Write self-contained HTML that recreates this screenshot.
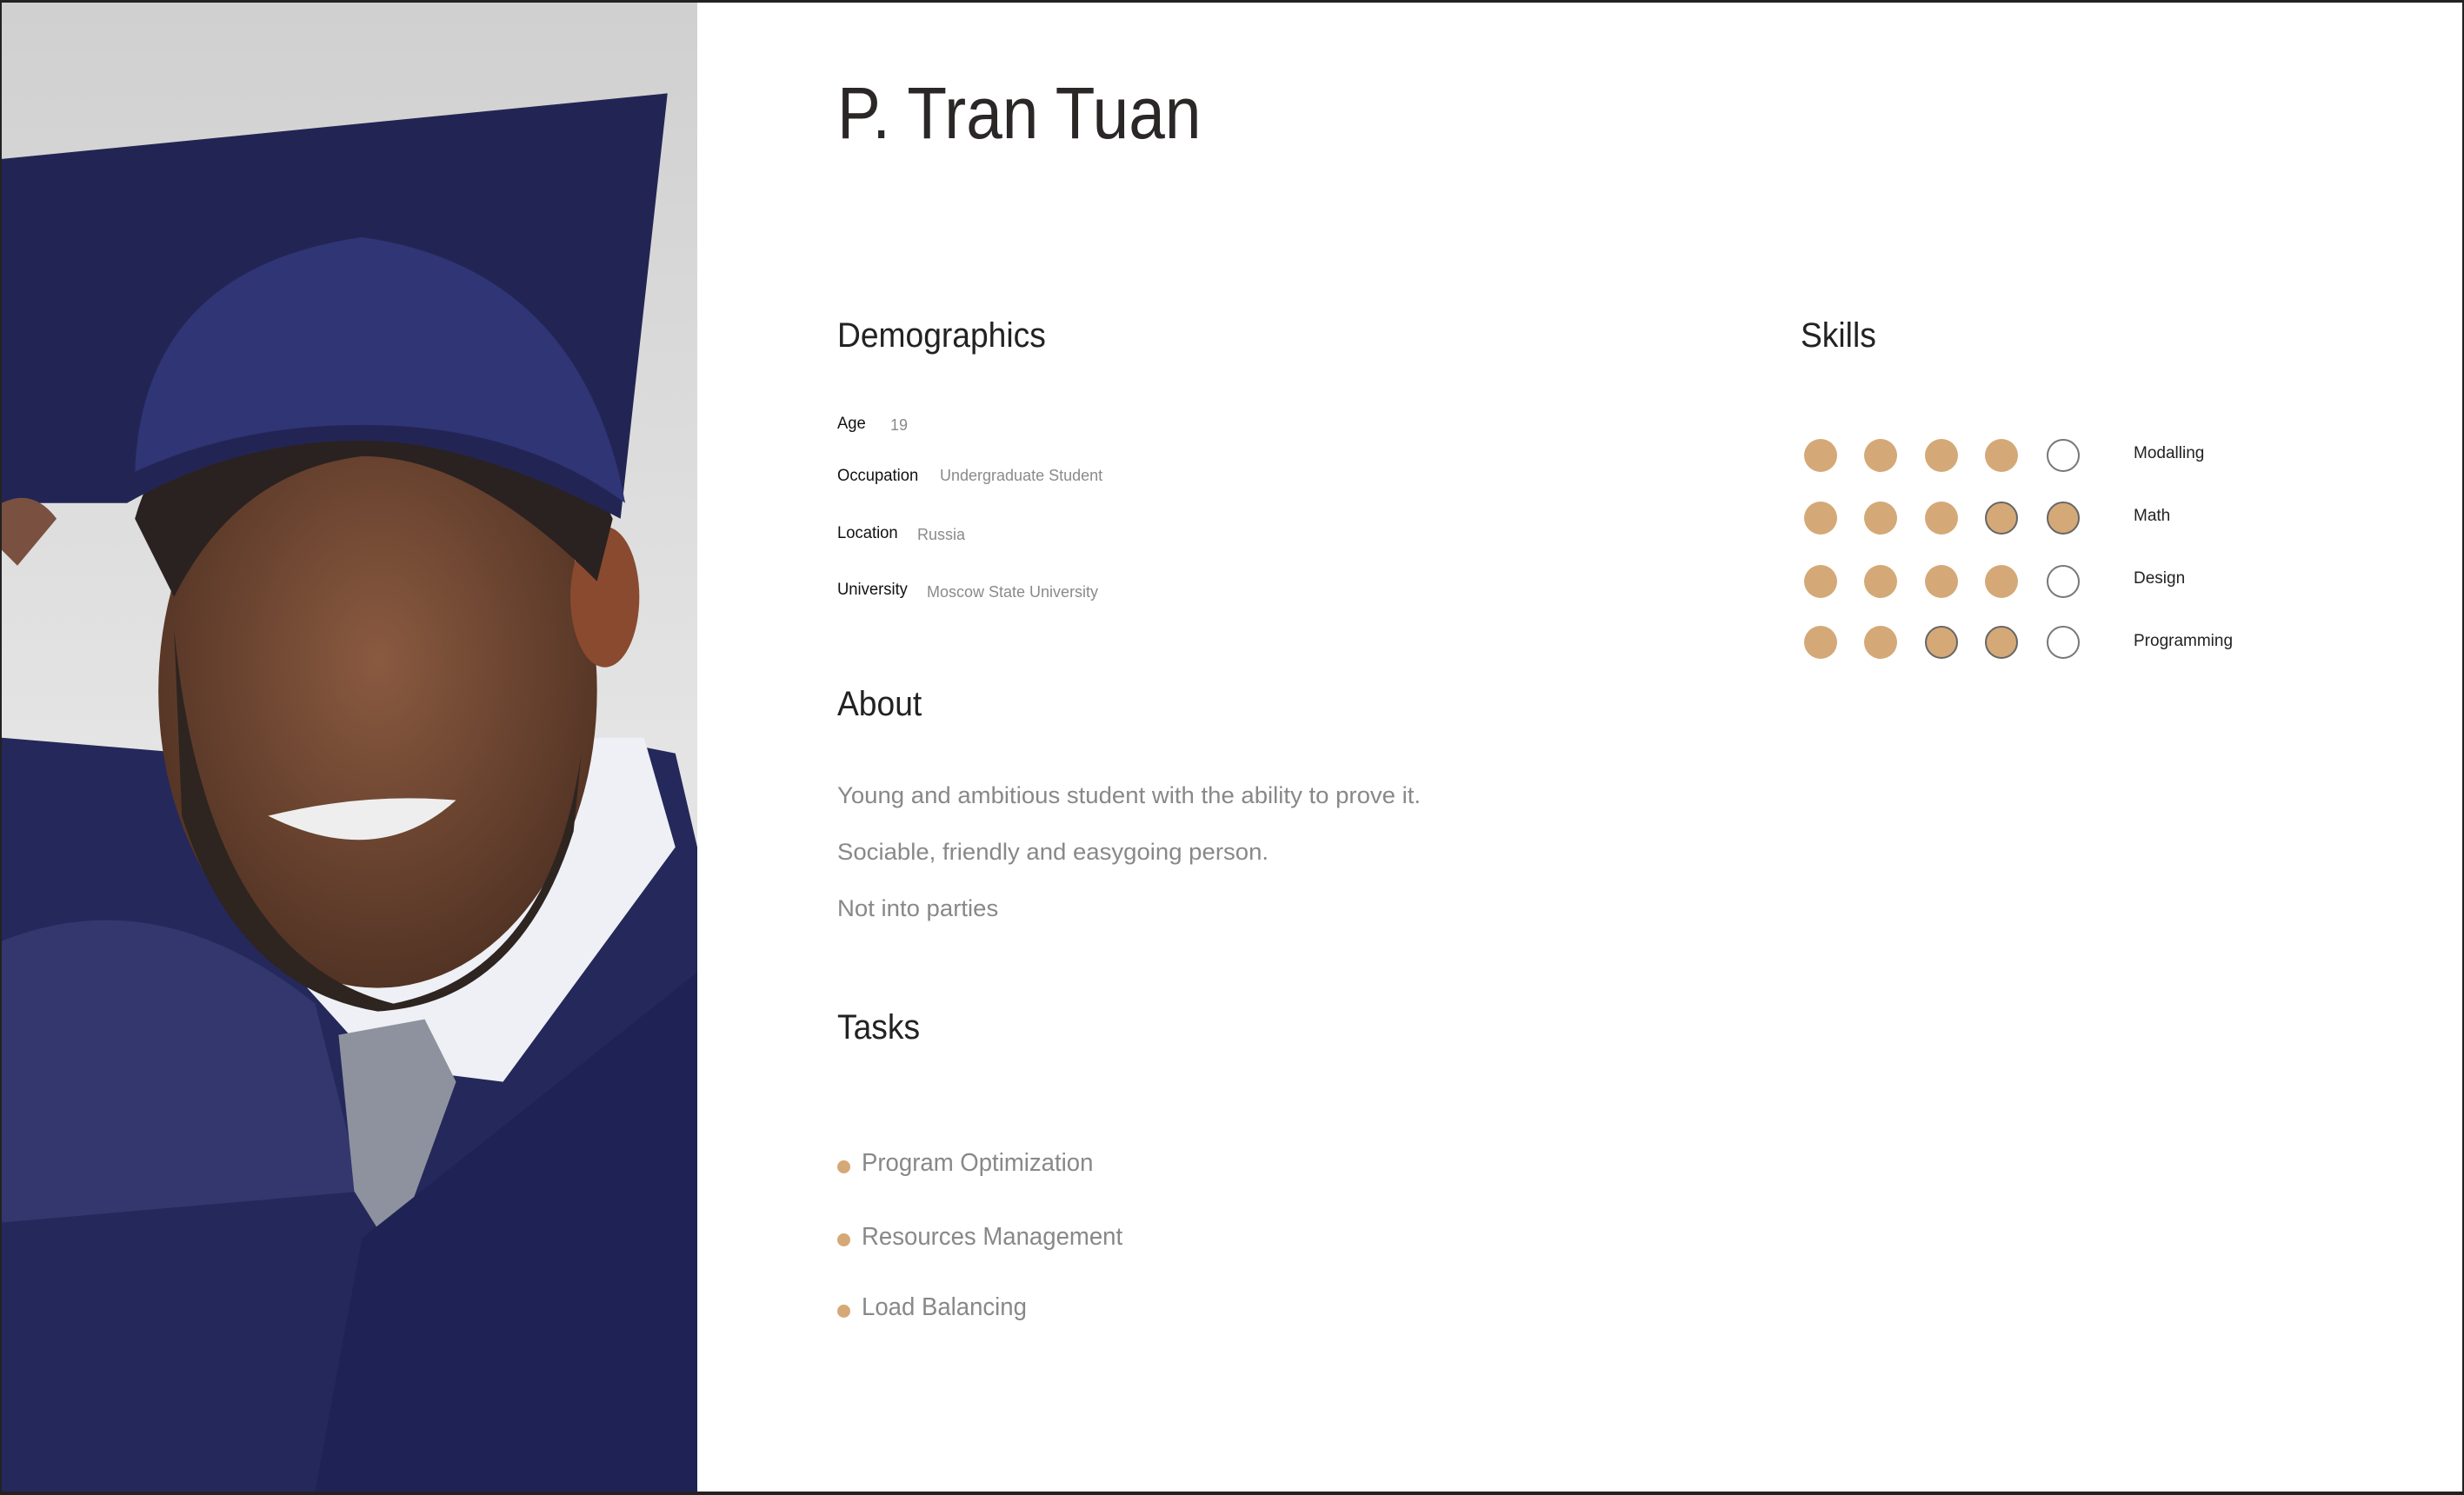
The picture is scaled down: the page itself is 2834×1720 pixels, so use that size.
<!DOCTYPE html>
<html><head><meta charset="utf-8"><style>
html,body{margin:0;padding:0}
body{width:2834px;height:1720px;position:relative;overflow:hidden;background:#fff;font-family:"Liberation Sans",sans-serif;}
.t{position:absolute;white-space:nowrap;line-height:1;transform:scaleX(.93);transform-origin:left top}
.h{font-size:40px;color:#222}
.k{font-size:19px;color:#111;transform:scaleX(.97)}
.v{font-size:18px;color:#8a8a8a;transform:scaleX(1)}
.p{font-size:27px;color:#888;transform:scaleX(1.02)}
.task{font-size:29px;color:#888;transform:scaleX(.95)}
.dot{position:absolute;width:15px;height:15px;border-radius:50%;background:#d4a977}
.c{position:absolute;width:38px;height:38px;border-radius:50%;background:#d4a977;box-sizing:border-box}
.c.o{border:2px solid #666}
.c.e{background:#fff;border:2px solid #777}
.sk{position:absolute;font-size:19px;color:#222;line-height:1;white-space:nowrap}
</style></head><body>
<div style="position:absolute;left:0;top:0;width:2834px;height:3px;background:#222"></div>
<div style="position:absolute;left:0;top:0;width:2px;height:1720px;background:#222"></div>
<div style="position:absolute;left:0;top:1716px;width:2834px;height:4px;background:#222"></div>
<div style="position:absolute;right:0;top:0;width:2px;height:1720px;background:#222"></div>
<svg style="position:absolute;left:2px;top:3px" width="800" height="1713" viewBox="0 0 444 952" preserveAspectRatio="none">
<defs><linearGradient id="bg" x1="0" y1="0" x2="0" y2="1"><stop offset="0" stop-color="#d0d0d0"/><stop offset=".5" stop-color="#e4e4e4"/><stop offset="1" stop-color="#dcdcdc"/></linearGradient>
<radialGradient id="sk" cx=".5" cy=".45" r=".6"><stop offset="0" stop-color="#8a5a40"/><stop offset="1" stop-color="#4e3022"/></radialGradient></defs>
<rect width="444" height="952" fill="url(#bg)"/>
<path d="M0 540 L0 952 L444 952 L444 540 L430 480 L380 470 L250 560 L120 480 L0 470Z" fill="#25285a"/>
<path d="M0 600 Q100 560 200 640 L230 760 L0 780Z" fill="#33376e"/>
<path d="M195 630 L260 560 L350 470 L410 470 L430 540 L320 690 L240 680Z" fill="#eef0f5"/>
<path d="M215 660 L270 650 L290 690 L250 800 L225 760Z" fill="#8d929e"/>
<path d="M230 790 L444 620 L444 952 L200 952Z" fill="#1f2254"/>
<ellipse cx="240" cy="440" rx="140" ry="190" fill="url(#sk)"/>
<ellipse cx="385" cy="380" rx="22" ry="45" fill="#8a4a30"/>
<path d="M110 400 Q130 610 250 640 Q350 620 370 480 L365 530 Q330 640 240 645 Q150 630 115 520Z" fill="#2e2420"/>
<path d="M170 520 Q230 505 290 510 Q240 555 170 520Z" fill="#eee"/>
<path d="M85 330 Q110 240 230 240 Q350 240 390 330 L380 370 Q300 290 230 290 Q150 300 110 380Z" fill="#2a2220"/>
<path d="M0 100 L425 58 L395 330 Q300 280 230 280 Q150 280 80 320 L0 320Z" fill="#222554"/>
<path d="M85 300 Q90 170 230 150 Q370 170 398 320 Q330 270 230 270 Q150 270 85 300Z" fill="#2f3575"/>
<path d="M0 320 Q20 310 35 330 L10 360 L0 350Z" fill="#7a5040"/>
</svg>
<div class="t" style="left:963px;top:88px;font-size:84px;color:#2b2727;transform:scaleX(.89)">P. Tran Tuan</div>
<div class="t h" style="left:963px;top:366px">Demographics</div>
<div class="t h" style="left:2071px;top:366px">Skills</div>
<div class="t k" style="left:963px;top:478px">Age</div><div class="t v" style="left:1024px;top:480px">19</div>
<div class="t k" style="left:963px;top:538px">Occupation</div><div class="t v" style="left:1081px;top:538px">Undergraduate Student</div>
<div class="t k" style="left:963px;top:604px">Location</div><div class="t v" style="left:1055px;top:606px">Russia</div>
<div class="t k" style="left:963px;top:669px">University</div><div class="t v" style="left:1066px;top:672px">Moscow State University</div>
<div class="t h" style="left:963px;top:790px">About</div>
<div class="t p" style="left:963px;top:902px">Young and ambitious student with the ability to prove it.</div>
<div class="t p" style="left:963px;top:967px">Sociable, friendly and easygoing person.</div>
<div class="t p" style="left:963px;top:1032px">Not into parties</div>
<div class="t h" style="left:963px;top:1162px">Tasks</div>
<div class="dot" style="left:963px;top:1335px"></div><div class="t task" style="left:991px;top:1324px">Program Optimization</div>
<div class="dot" style="left:963px;top:1419px"></div><div class="t task" style="left:991px;top:1409px">Resources Management</div>
<div class="dot" style="left:963px;top:1501px"></div><div class="t task" style="left:991px;top:1490px">Load Balancing</div>
<div class="c" style="left:2075px;top:505px"></div><div class="c" style="left:2144px;top:505px"></div><div class="c" style="left:2214px;top:505px"></div><div class="c" style="left:2283px;top:505px"></div><div class="c e" style="left:2354px;top:505px"></div>
<div class="c" style="left:2075px;top:577px"></div><div class="c" style="left:2144px;top:577px"></div><div class="c" style="left:2214px;top:577px"></div><div class="c o" style="left:2283px;top:577px"></div><div class="c o" style="left:2354px;top:577px"></div>
<div class="c" style="left:2075px;top:650px"></div><div class="c" style="left:2144px;top:650px"></div><div class="c" style="left:2214px;top:650px"></div><div class="c" style="left:2283px;top:650px"></div><div class="c e" style="left:2354px;top:650px"></div>
<div class="c" style="left:2075px;top:720px"></div><div class="c" style="left:2144px;top:720px"></div><div class="c o" style="left:2214px;top:720px"></div><div class="c o" style="left:2283px;top:720px"></div><div class="c e" style="left:2354px;top:720px"></div>
<div class="sk" style="left:2454px;top:512px">Modalling</div>
<div class="sk" style="left:2454px;top:584px">Math</div>
<div class="sk" style="left:2454px;top:656px">Design</div>
<div class="sk" style="left:2454px;top:728px">Programming</div>
</body></html>
